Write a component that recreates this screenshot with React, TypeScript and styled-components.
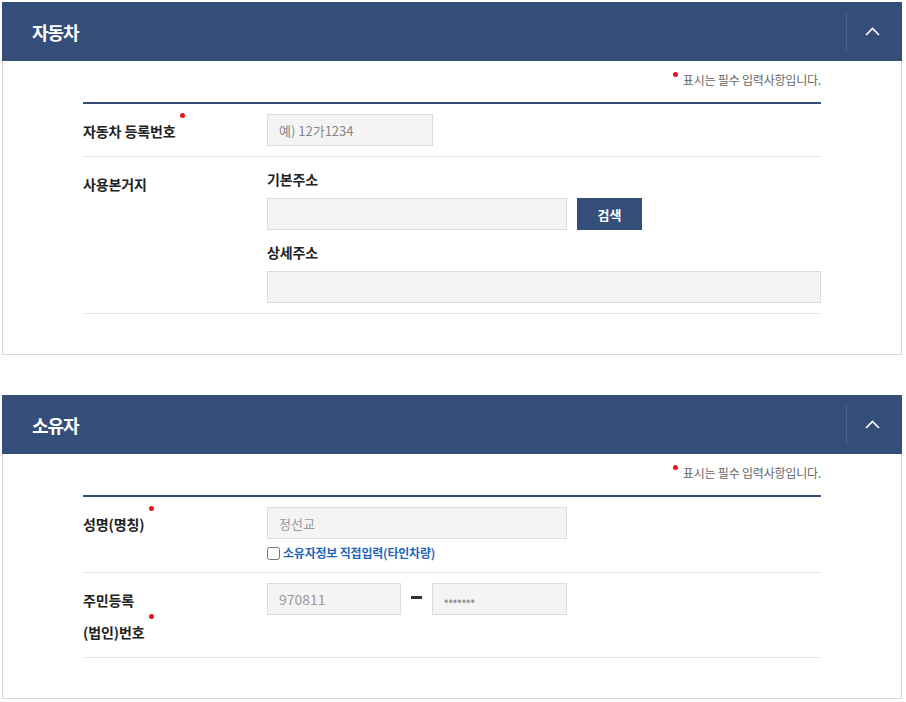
import styled, { createGlobalStyle } from "styled-components";

const GlobalStyle = createGlobalStyle`
  body {
    margin: 0;
    background: #fff;
    font-family: "Noto Sans CJK KR", "Noto Sans", sans-serif;
    color: #222;
  }
  * { box-sizing: border-box; }
`;

const Page = styled.div`
  padding: 2px 4px 0 2px;
`;

const Section = styled.section`
  margin-bottom: 40px;
  &:last-of-type {
    margin-bottom: 0;
  }
`;

const Header = styled.div`
  display: flex;
  align-items: center;
  justify-content: space-between;
  height: 59px;
  padding-left: 30px;
  background: #344d79;
`;

const Title = styled.h2`
  margin: 0;
  font-size: 18px;
  font-weight: 700;
  letter-spacing: -1px;
  color: #fff;
`;

const Toggle = styled.button`
  display: flex;
  align-items: center;
  justify-content: center;
  width: 56px;
  height: 40px;
  padding: 0 5px 0 0;
  border: 0;
  border-left: 1px solid #4b6089;
  background: transparent;
  cursor: pointer;
`;

const Body = styled.div`
  padding: 0 80px 40px;
  border: 1px solid #d6d6d6;
  border-top: 0;
`;

const Notice = styled.p`
  margin: 0;
  padding: 10px 0 13px;
  text-align: right;
  font-size: 12px;
  line-height: 18px;
  letter-spacing: -0.2px;
  color: #666;
`;

const Dot = styled.span`
  position: relative;
  &::before {
    content: "";
    position: absolute;
    left: -10px;
    top: 1px;
    width: 5px;
    height: 5px;
    border-radius: 50%;
    background: #e8141b;
  }
`;

const Table = styled.div`
  border-top: 2px solid #344b74;
`;

const Row = styled.div`
  display: grid;
  grid-template-columns: 184px 1fr;
  padding: 10px 0;
  border-bottom: 1px solid #e8e8e8;
`;

const Label = styled.div`
  padding-top: 1px;
  margin-bottom: -1px;
  font-size: 14px;
  font-weight: 700;
  line-height: 32px;
  letter-spacing: -0.1px;
  color: #222;
`;

const Req = styled.span`
  position: relative;
  &::after {
    content: "";
    position: absolute;
    right: -9px;
    top: -8px;
    width: 5px;
    height: 5px;
    border-radius: 50%;
    background: #e8141b;
  }
`;

const Field = styled.div`
  display: flex;
  flex-direction: column;
  align-items: flex-start;
`;

const SubLabel = styled.div<{ $gap?: number }>`
  margin-top: ${(p) => p.$gap ?? 0}px;
  margin-bottom: 6px;
  font-size: 14px;
  font-weight: 700;
  line-height: 25px;
  letter-spacing: -0.1px;
  color: #222;
`;

const Line = styled.div`
  display: flex;
  align-items: center;
  gap: 10px;
  width: 100%;
`;

const Input = styled.input<{ $w?: number; $size?: number }>`
  width: ${(p) => (p.$w ? `${p.$w}px` : "100%")};
  height: 32px;
  padding: 0 11px;
  border: 1px solid #dcdcdc;
  border-radius: 0;
  background: #f4f4f4;
  font-family: inherit;
  font-size: ${(p) => p.$size ?? 13}px;
  color: #999;
  outline: none;
  &::placeholder {
    color: #888;
  }
`;

const SearchButton = styled.button`
  width: 65px;
  height: 32px;
  border: 0;
  background: #344d79;
  color: #fff;
  font-family: inherit;
  font-size: 13px;
  font-weight: 700;
  cursor: pointer;
`;

const Check = styled.label`
  display: flex;
  align-items: center;
  gap: 3px;
  margin-top: 5px;
  font-size: 12px;
  font-weight: 700;
  line-height: 18px;
  letter-spacing: -0.2px;
  color: #1f66b8;
  input {
    width: 13px;
    height: 13px;
    margin: 0;
  }
`;

const Dash = styled.span`
  align-self: flex-start;
  width: 11px;
  height: 3px;
  margin-top: 13px;
  background: #333;
`;

const Chevron = () => (
  <svg width="15" height="9" viewBox="0 0 15 9" fill="none">
    <polyline points="1,8 7.5,1.5 14,8" stroke="#fff" strokeWidth="1.6" />
  </svg>
);

const Panel = ({ title, children }: { title: string; children: React.ReactNode }) => (
  <Section>
    <Header>
      <Title>{title}</Title>
      <Toggle aria-label="접기">
        <Chevron />
      </Toggle>
    </Header>
    <Body>
      <Notice>
        <Dot />
        표시는 필수 입력사항입니다.
      </Notice>
      <Table>{children}</Table>
    </Body>
  </Section>
);

export default function App() {
  return (
    <Page>
      <GlobalStyle />
      <Panel title="자동차">
        <Row>
          <Label>
            <Req>자동차 등록번호</Req>
          </Label>
          <Field>
            <Input $w={166} placeholder="예) 12가1234" />
          </Field>
        </Row>
        <Row>
          <Label>사용본거지</Label>
          <Field>
            <SubLabel>기본주소</SubLabel>
            <Line>
              <Input $w={300} />
              <SearchButton>검색</SearchButton>
            </Line>
            <SubLabel $gap={10}>상세주소</SubLabel>
            <Input />
          </Field>
        </Row>
      </Panel>
      <Panel title="소유자">
        <Row>
          <Label>
            <Req>성명(명칭)</Req>
          </Label>
          <Field>
            <Input $w={300} readOnly value="정선교" />
            <Check>
              <input type="checkbox" />
              소유자정보 직접입력(타인차량)
            </Check>
          </Field>
        </Row>
        <Row>
          <Label>
            주민등록
            <br />
            <Req>(법인)번호</Req>
          </Label>
          <Field>
            <Line>
              <Input $w={134} $size={14} readOnly value="970811" />
              <Dash />
              <Input $w={135} type="password" readOnly value="1234567" />
            </Line>
          </Field>
        </Row>
      </Panel>
    </Page>
  );
}
